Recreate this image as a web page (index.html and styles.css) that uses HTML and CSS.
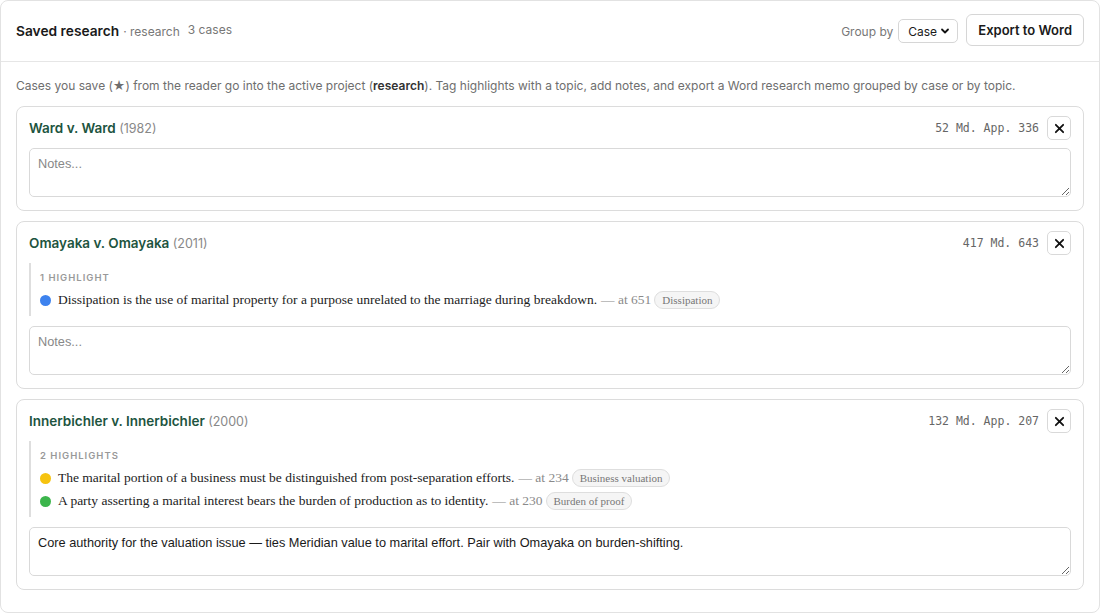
FILE: index.html
```html
<!DOCTYPE html>
<html lang="en">
<head>
    <meta charset="UTF-8">
    <meta name="viewport" content="width=device-width, initial-scale=1.0">
    <title>Saved research</title>
    <link rel="stylesheet" href="styles.css">
</head>
<body>

<div class="panel">
    <div class="panel-header">
        <div class="title-group">
            <span class="panel-title">Saved research</span>
            <span class="project-name">· research</span>
            <span class="case-count">3 cases</span>
        </div>
        <div class="actions">
            <label class="group-label" for="groupBy">Group by</label>
            <select id="groupBy" class="group-select">
                <option>Case</option>
                <option>Topic</option>
            </select>
            <button class="export-btn">Export to Word</button>
        </div>
    </div>

    <div class="panel-body">
        <p class="intro">Cases you save (★) from the reader go into the active project (<b>research</b>). Tag highlights with a topic, add notes, and export a Word research memo grouped by case or by topic.</p>

        <div class="case-card">
            <div class="case-head">
                <div class="case-name">Ward v. Ward <span class="case-year">(1982)</span></div>
                <div class="case-right">
                    <span class="citation">52 Md. App. 336</span>
                    <button class="remove-btn" title="Remove">
                        <svg width="11" height="11" viewBox="0 0 12 12"><path d="M2 2 L10 10 M10 2 L2 10" stroke="#111" stroke-width="2" stroke-linecap="round"/></svg>
                    </button>
                </div>
            </div>
            <textarea class="notes" placeholder="Notes..."></textarea>
        </div>

        <div class="case-card">
            <div class="case-head">
                <div class="case-name">Omayaka v. Omayaka <span class="case-year">(2011)</span></div>
                <div class="case-right">
                    <span class="citation">417 Md. 643</span>
                    <button class="remove-btn" title="Remove">
                        <svg width="11" height="11" viewBox="0 0 12 12"><path d="M2 2 L10 10 M10 2 L2 10" stroke="#111" stroke-width="2" stroke-linecap="round"/></svg>
                    </button>
                </div>
            </div>
            <div class="highlights">
                <div class="hl-label">1 highlight</div>
                <div class="hl-row">
                    <span class="dot dot-blue"></span>
                    <span class="hl-text">Dissipation is the use of marital property for a purpose unrelated to the marriage during breakdown.</span>
                    <span class="hl-page">— at 651</span>
                    <span class="tag">Dissipation</span>
                </div>
            </div>
            <textarea class="notes" placeholder="Notes..."></textarea>
        </div>

        <div class="case-card">
            <div class="case-head">
                <div class="case-name">Innerbichler v. Innerbichler <span class="case-year">(2000)</span></div>
                <div class="case-right">
                    <span class="citation">132 Md. App. 207</span>
                    <button class="remove-btn" title="Remove">
                        <svg width="11" height="11" viewBox="0 0 12 12"><path d="M2 2 L10 10 M10 2 L2 10" stroke="#111" stroke-width="2" stroke-linecap="round"/></svg>
                    </button>
                </div>
            </div>
            <div class="highlights">
                <div class="hl-label">2 highlights</div>
                <div class="hl-row">
                    <span class="dot dot-yellow"></span>
                    <span class="hl-text">The marital portion of a business must be distinguished from post-separation efforts.</span>
                    <span class="hl-page">— at 234</span>
                    <span class="tag">Business valuation</span>
                </div>
                <div class="hl-row">
                    <span class="dot dot-green"></span>
                    <span class="hl-text">A party asserting a marital interest bears the burden of production as to identity.</span>
                    <span class="hl-page">— at 230</span>
                    <span class="tag">Burden of proof</span>
                </div>
            </div>
            <textarea class="notes" placeholder="Notes...">Core authority for the valuation issue — ties Meridian value to marital effort. Pair with Omayaka on burden-shifting.</textarea>
        </div>
    </div>
</div>

</body>
</html>
```

FILE: styles.css
```css
body {
    margin: 0;
    font-family: Inter, 'Liberation Sans', sans-serif;
    background-color: #ffffff;
    color: #1a1a1a;
}
.panel {
    height: 613px;
    border: 1px solid #e2e2e2;
    border-radius: 8px;
    box-sizing: border-box;
    overflow: hidden;
}
.panel-header {
    height: 61px;
    padding: 0 15px;
    display: flex;
    justify-content: space-between;
    align-items: center;
    border-bottom: 1px solid #e6e6e6;
    box-sizing: border-box;
}
.title-group {
    display: flex;
    align-items: baseline;
    gap: 4px;
}
.panel-title {
    font-size: 13.75px;
    font-weight: 600;
    color: #1a1a1a;
}
.project-name {
    font-size: 12px;
    color: #777;
}
.case-count {
    font-size: 12px;
    color: #777;
    margin-left: 4px;
    position: relative;
    top: -2px;
}
.actions {
    display: flex;
    align-items: center;
}
.group-label {
    font-size: 12px;
    color: #777;
    margin-right: 5px;
}
.group-select {
    -webkit-appearance: none;
    appearance: none;
    height: 24px;
    width: 60px;
    padding: 0 0 0 9px;
    font-family: inherit;
    font-size: 12px;
    color: #1a1a1a;
    border: 1px solid #d6d6d6;
    border-radius: 5px;
    background-color: #fff;
    background-image: url("data:image/svg+xml;utf8,<svg xmlns='http://www.w3.org/2000/svg' width='10' height='10' viewBox='0 0 10 10'><path d='M2 3.5 L5 6.5 L8 3.5' fill='none' stroke='%23111' stroke-width='1.8' stroke-linecap='round' stroke-linejoin='round'/></svg>");
    background-repeat: no-repeat;
    background-position: right 7px center;
    margin-right: 8px;
}
.export-btn {
    height: 32px;
    padding: 0 11px;
    font-family: inherit;
    font-size: 13px;
    font-weight: 600;
    color: #1a1a1a;
    background: #fff;
    border: 1px solid #d6d6d6;
    border-radius: 6px;
    cursor: pointer;
    position: relative;
    top: -1px;
}
.panel-body {
    padding: 14px 15px 0 15px;
}
.intro {
    margin: 0 0 12px 0;
    font-size: 12px;
    line-height: 18px;
    color: #6e6e6e;
    position: relative;
    top: 1px;
}
.intro b {
    color: #333;
    font-weight: 600;
}
.case-card {
    border: 1px solid #dcdcdc;
    border-radius: 8px;
    padding: 9px 12px 13px 12px;
    margin-bottom: 10px;
}
.case-head {
    display: flex;
    justify-content: space-between;
    align-items: center;
    height: 24px;
    margin-bottom: 8px;
}
.case-name {
    font-size: 13.5px;
    font-weight: 600;
    color: #1d5440;
}
.case-year {
    font-weight: 400;
    font-size: 12.5px;
    color: #888;
}
.case-right {
    display: flex;
    align-items: center;
    gap: 8px;
}
.citation {
    font-family: 'DejaVu Sans Mono', monospace;
    font-size: 11.5px;
    color: #666;
}
.remove-btn {
    width: 24px;
    height: 24px;
    padding: 0;
    display: flex;
    align-items: center;
    justify-content: center;
    background: #fff;
    border: 1px solid #d9d9d9;
    border-radius: 5px;
    cursor: pointer;
}
.highlights {
    border-left: 2px solid #dedede;
    padding: 8px 0 6px 9px;
    margin-bottom: 10px;
}
.hl-label {
    font-size: 9.5px;
    font-weight: 600;
    letter-spacing: 1px;
    text-transform: uppercase;
    color: #999;
    line-height: 14px;
    margin-bottom: 5px;
}
.hl-row {
    display: flex;
    align-items: center;
    height: 20px;
    margin-bottom: 3px;
    font-family: 'Liberation Serif', serif;
    font-size: 13.5px;
}
.hl-row:last-child {
    margin-bottom: 0;
}
.dot {
    width: 11px;
    height: 11px;
    border-radius: 50%;
    margin-right: 7px;
    flex-shrink: 0;
}
.dot-blue {
    background-color: #3d82ee;
}
.dot-yellow {
    background-color: #f6c30f;
}
.dot-green {
    background-color: #3cb54c;
}
.hl-text {
    color: #222;
}
.hl-page {
    color: #8a8a8a;
    margin-left: 4px;
}
.tag {
    margin-left: 3px;
    padding: 0 7px;
    height: 16px;
    line-height: 16px;
    font-size: 11px;
    color: #777;
    background: #f5f5f5;
    border: 1px solid #dedede;
    border-radius: 9px;
}
.notes {
    display: block;
    width: 100%;
    height: 49px;
    box-sizing: border-box;
    padding: 7px 8px;
    font-family: 'Liberation Sans', sans-serif;
    font-size: 12.75px;
    color: #1a1a1a;
    border: 1px solid #d9d9d9;
    border-radius: 5px;
    resize: vertical;
}
.notes::placeholder {
    color: #888;
}
```
